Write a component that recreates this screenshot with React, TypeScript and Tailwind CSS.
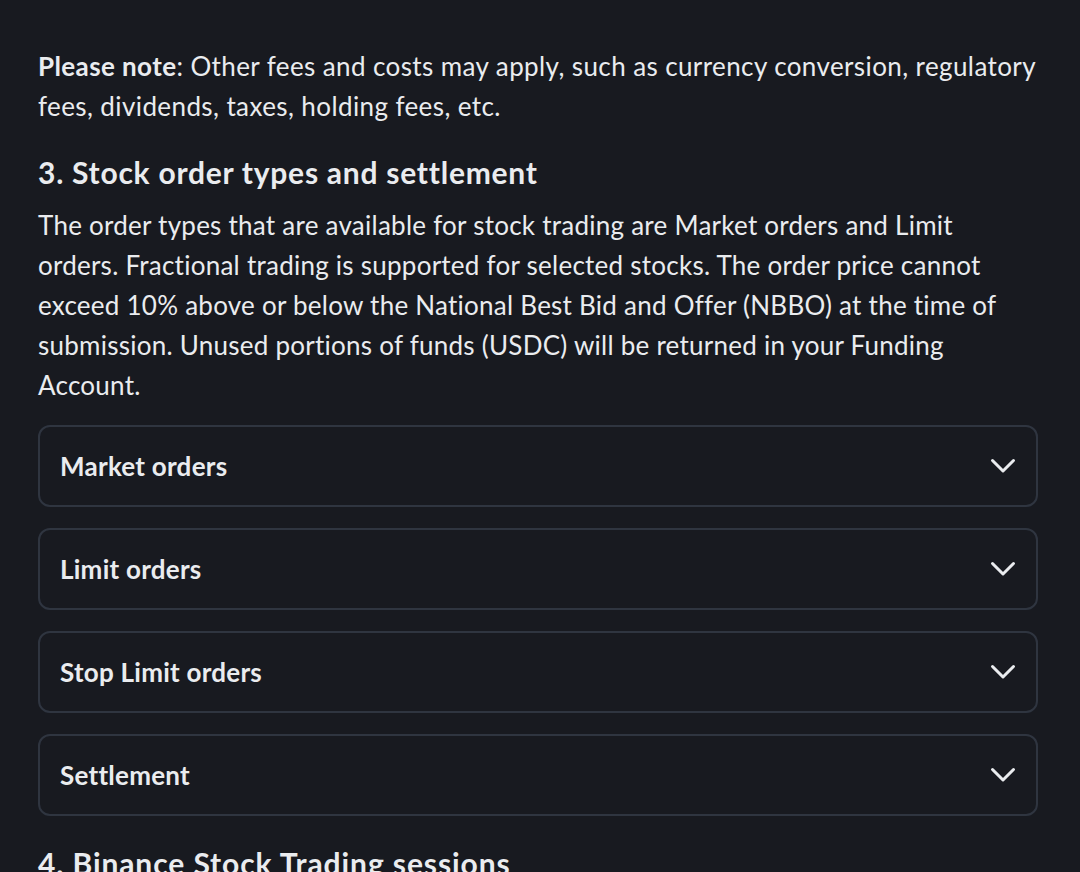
const items = ["Market orders", "Limit orders", "Stop Limit orders", "Settlement"];

function Chevron() {
  return (
    <svg width="26" height="16" viewBox="0 0 26 16" fill="none" className="shrink-0">
      <path d="M2.5 2.5 L13 13 L23.5 2.5" stroke="#eaecef" strokeWidth="3" strokeLinecap="round" strokeLinejoin="round" />
    </svg>
  );
}

export default function App() {
  return (
    <div className="min-h-[872px] bg-[#181a20] text-[#eaecef] pl-[38px] pr-[42px] pt-[46px] overflow-hidden" style={{ fontFamily: "Lato, 'Noto Sans', sans-serif" }}>
      <p className="text-[26px] leading-[40px] tracking-[0.4px]">
        <span className="font-bold">Please note</span>: Other fees and costs may apply, such as currency conversion, regulatory
        fees, dividends, taxes, holding fees, etc.
      </p>

      <h2 className="mt-[26px] text-[30px] leading-[40px] font-bold tracking-[0.75px]">3. Stock order types and settlement</h2>
      <p className="mt-[13px] text-[26px] leading-[40px] tracking-[0.25px]">
        The order types that are available for stock trading are Market orders and Limit orders. Fractional trading is
        supported for selected stocks. The order price cannot exceed 10% above or below the National Best Bid and Offer
        (NBBO) at the time of submission. Unused portions of funds (USDC) will be returned in your Funding Account.
      </p>

      <div className="mt-[20px] flex flex-col gap-[21px]">
        {items.map((label) => (
          <div
            key={label}
            className="h-[82px] rounded-[12px] border-2 border-[#2f3540] flex items-center justify-between pl-[20px] pr-[20px]"
          >
            <span className="text-[26px] font-bold tracking-[0.25px]">{label}</span>
            <Chevron />
          </div>
        ))}
      </div>

      <h2 className="mt-[27px] text-[30px] leading-[40px] font-bold tracking-[0.9px]">4. Binance Stock Trading sessions</h2>
    </div>
  );
}
